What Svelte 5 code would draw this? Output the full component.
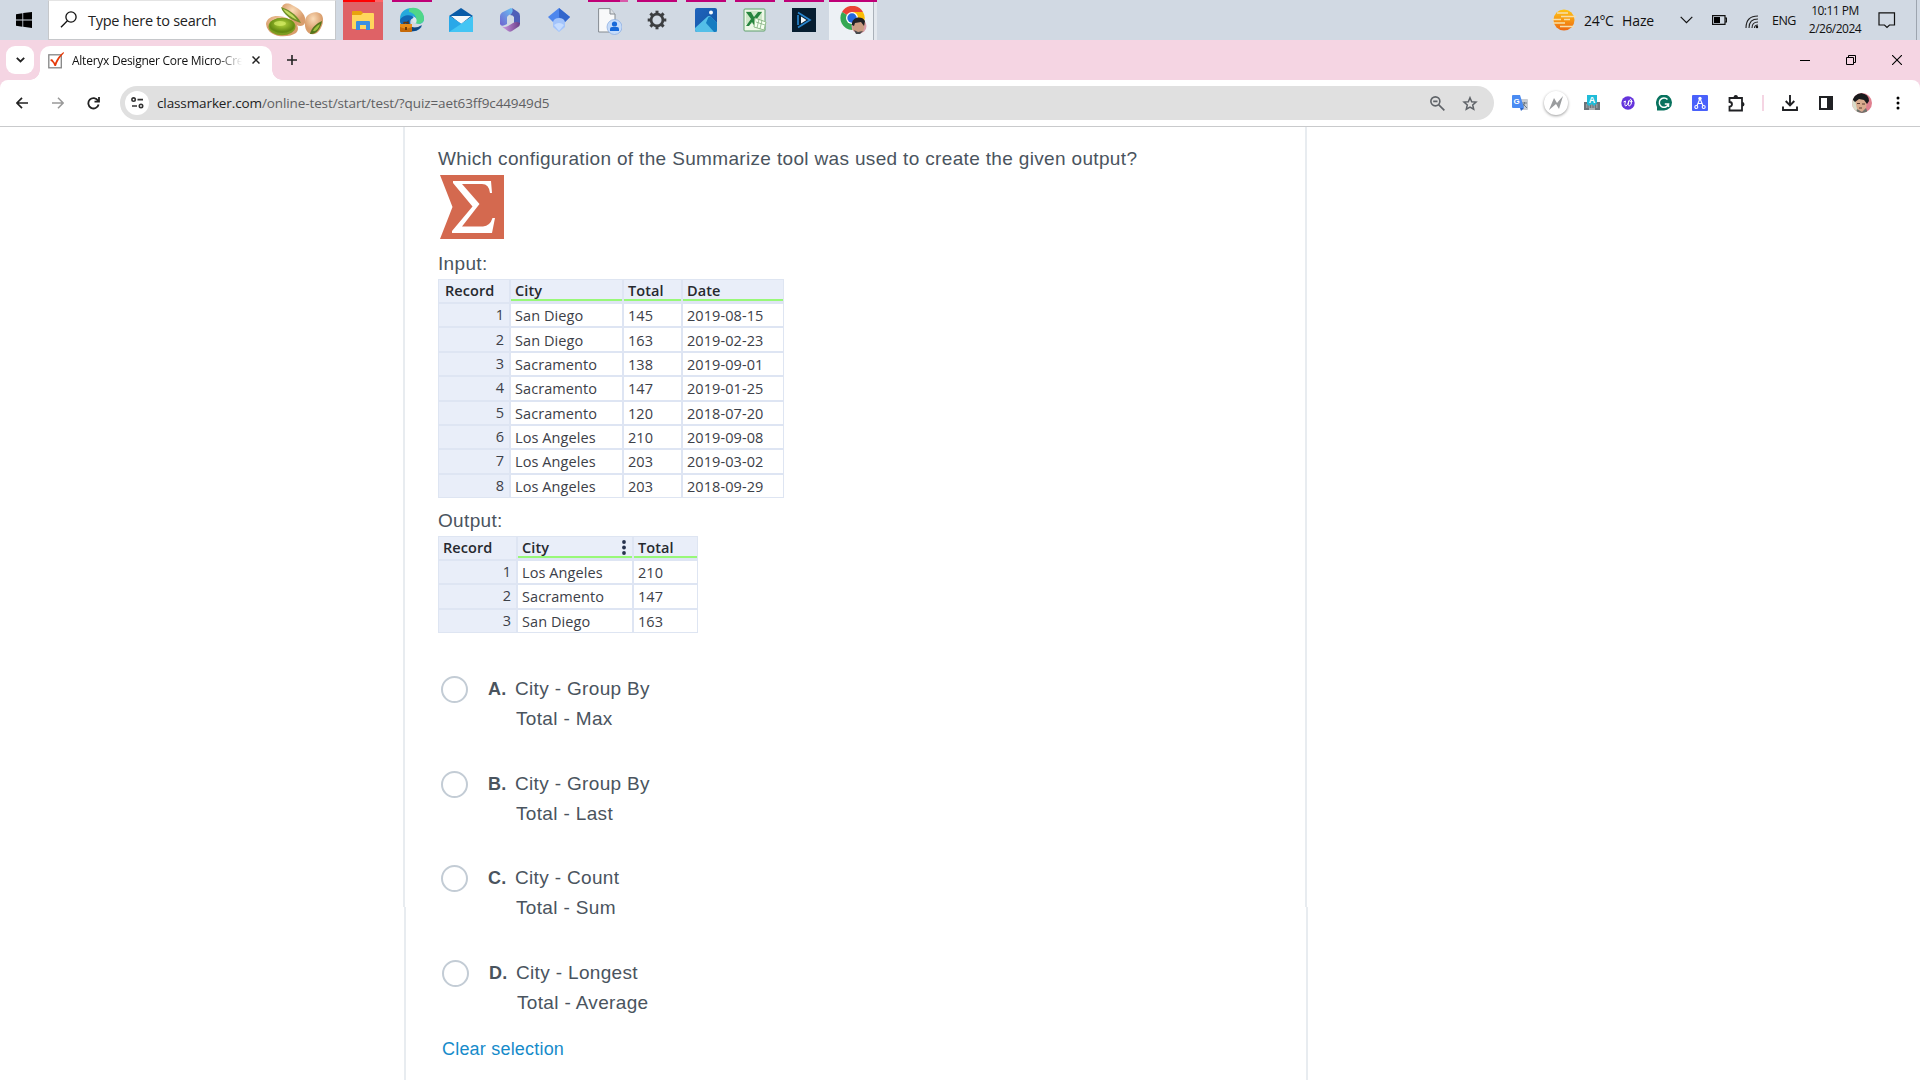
<script>
  const inputRows = [
    ['San Diego', '145', '2019-08-15'],
    ['San Diego', '163', '2019-02-23'],
    ['Sacramento', '138', '2019-09-01'],
    ['Sacramento', '147', '2019-01-25'],
    ['Sacramento', '120', '2018-07-20'],
    ['Los Angeles', '210', '2019-09-08'],
    ['Los Angeles', '203', '2019-03-02'],
    ['Los Angeles', '203', '2018-09-29'],
  ];
  const outputRows = [
    ['Los Angeles', '210'],
    ['Sacramento', '147'],
    ['San Diego', '163'],
  ];
  const options = [
    { key: 'A', first: 'City - Group By', second: 'Total - Max' },
    { key: 'B', first: 'City - Group By', second: 'Total - Last' },
    { key: 'C', first: 'City - Count', second: 'Total - Sum' },
    { key: 'D', first: 'City - Longest', second: 'Total - Average' },
  ];
</script>

{#snippet answer(o)}
  <label class="option">
    <span class="radio"></span>
    <b>{o.key}.</b>
    <span class="lines"><span>{o.first}</span><span class="second">{o.second}</span></span>
  </label>
{/snippet}

<div class="screen">
  <header class="taskbar">
    <div class="start">
      <svg width="16" height="16" viewBox="0 0 16 16"><path d="M0 2.2 6.4 1.3V7.5H0zM7.2 1.1 16 0V7.5H7.2zM0 8.4H6.4V14.7L0 13.8zM7.2 8.4H16V16L7.2 14.8z" /></svg>
    </div>
    <div class="search">
      <svg width="18" height="18" viewBox="0 0 18 18" fill="none" stroke="#111" stroke-width="1.3"><circle cx="11" cy="6" r="5.1" /><path d="M7.4 9.7 1 16.2" /></svg>
      <span>Type here to search</span>
      <svg class="nuts" width="60" height="36" viewBox="0 0 60 36">
        <defs>
          <radialGradient id="shell" cx=".45" cy=".3"><stop offset="0" stop-color="#fbdcb8" /><stop offset="1" stop-color="#d99d6c" /></radialGradient>
          <radialGradient id="nut" cx=".5" cy=".4"><stop offset="0" stop-color="#b9d93e" /><stop offset="1" stop-color="#648a12" /></radialGradient>
        </defs>
        <path d="M17 6C17 2 22 0 27 3 36 7 42 14 40 21 38 26 31 24 27 20z" fill="url(#shell)" />
        <path d="M16 5C22 7 32 12 36 21 28 19 18 13 16 5" fill="#6f8f27" />
        <path d="M18 7C23 9 29 13 32 18 26 15 21 12 18 7" fill="#c4dc62" />
        <path d="M1 22C2 13 15 12 24 17 33 20 35 27 31 31 24 36 3 37 1 22" fill="url(#shell)" />
        <ellipse cx="17" cy="24.500" rx="13.500" ry="8.800" fill="#7d9c20" />
        <ellipse cx="17" cy="23.500" rx="12.500" ry="7.500" fill="url(#nut)" />
        <ellipse cx="15" cy="21.500" rx="6" ry="2.500" fill="#d5ec68" opacity=".7" />
        <path d="M40 20C40 11 51 8 56 12 60 16 58 26 52 31 44 35 39 28 40 20" fill="url(#shell)" />
        <path d="M45 32C46 26 52 21 57 19 56 26 51 33 45 32" fill="#55751b" />
        <path d="M48 29C49 26 53 23 55 22 54 26 51 30 48 29" fill="#9ec03c" />
      </svg>
    </div>

    <nav class="apps">
      <div class="app explorer">
        <svg width="24" height="24" viewBox="0 0 24 24"><path d="M1 4Q1 3 2 3H10L12 5V9H1z" fill="#e8a30d" /><path d="M1 7H10L12 5H22Q23 5 23 6V20Q23 21 22 21H2Q1 21 1 20z" fill="#ffd65c" /><path d="M5 22V14Q5 13 6 13H18Q19 13 19 14V22H15V17H9V22z" fill="#3b8fe0" /></svg>
      </div>
      <div class="app open">
        <svg width="24" height="26" viewBox="0 0 24 26"><path d="M0 12C0 5 5 1 12 1S24 6 24 12C24 16 20 18 16 16 17 12 15 9 11 9 6 9 2 12 0 17z" fill="#25a9dc" /><path d="M9 1.500C17-1 24 4 24 12 24 16 19 18 15 16 18 11 15 6 9 5z" fill="#50d788" /><path d="M0 13C2 8 12 6 15 12 10 10 9 16 12 20 16 22 20 21 22 19 19 25 10 26 5 22 1 19 0 16 0 13" fill="#1268b4" /><path d="M9 13C8 20 14 23 22 18 17 27 7 25 6 18 6 15 7 14 9 13" fill="#104780" /><path d="M16 16C12 16 11 12 14 10 17 11 17 14 16 16" fill="#dce7f0" /><rect x="0" y="17" width="12" height="8" rx="1" fill="#c66a08" /><path d="M0 17H12V20L6 22 0 20z" fill="#e78c18" /><path d="M4 17V15.500H8V17" fill="none" stroke="#68370b" stroke-width="1.300" /><rect x="5" y="20" width="2" height="3" fill="#6b3908" /></svg>
      </div>
      <div class="app">
        <svg width="24" height="24" viewBox="0 0 24 24"><path d="M0 8 12 0 24 8 12 16z" fill="#095ba7" /><path d="M2 8H22L12 16z" fill="#f5f8fa" /><path d="M0 8 12 16 0 24z" fill="#37b5ef" /><path d="M0 8 24 23V24H0z" fill="#29a8e8" /><path d="M24 8V24H0z" fill="#43c5f4" /></svg>
      </div>
      <div class="app">
        <svg width="20" height="24" viewBox="0 0 20 24">
          <defs><linearGradient id="m1" x1="0" y1="1" x2="1" y2="0"><stop stop-color="#6f62cf" /><stop offset="1" stop-color="#69c8f6" /></linearGradient><linearGradient id="m2" x1="0" x2="1"><stop stop-color="#d6a0e9" /><stop offset="1" stop-color="#683d87" /></linearGradient></defs>
          <path d="M11 0 2 4.500Q0 6 0 8V16Q1 19 5 17L7 16V9.500Q7 8 9 7L14 5Q14 1 11 0" fill="url(#m1)" />
          <path d="M12 0 18 4Q20 5 20 8V16Q18 19 14 17V9Q13 7 10 7 14 4 12 0" fill="#4f5fb8" />
          <path d="M1 18 8 23Q10 24.500 12 23L18 19Q20 18 20 15 16 13 13 15L8 18Q4 20 1 18" fill="url(#m2)" />
        </svg>
      </div>
      <div class="app">
        <svg width="24" height="24" viewBox="0 0 24 24"><path d="M12 0 23 9 17 15H7L1 9z" fill="#4d86ed" /><path d="M12 0 23 9 17 15 12 9z" fill="#3266cc" /><path d="M6 14Q7 10 12 10T18 14V19L12 24 6 19z" fill="#a3c4fb" /><path d="M7 17Q12 13 17 17L12 23z" fill="#c5dcff" /></svg>
      </div>
      <div class="app open grouped">
        <svg class="contact" width="24" height="27" viewBox="0 0 24 27"><path d="M.6.600H12L17 6V24H.600z" fill="#f8f9fa" stroke="#858b91" /><path d="M12 .600V6H17" fill="#dfe3e7" stroke="#858b91" /><circle cx="16.500" cy="19" r="7.500" fill="#c6dcfa" stroke="#86a9df" stroke-width=".7" /><circle cx="16.500" cy="16" r="2.600" fill="#1769da" /><path d="M12 23V21Q12 19 14 19H19Q21 19 21 21V23z" fill="#1769da" /></svg>
      </div>
      <div class="app open">
        <svg width="20" height="20" viewBox="-10 -10 20 20">
          <circle r="5.900" fill="none" stroke="#3c3e41" stroke-width="2.700" />
          {#each [0, 45, 90, 135, 180, 225, 270, 315] as a}<rect x="-1.500" y="-9.300" width="3" height="3.200" fill="#3c3e41" transform="rotate({a})" />{/each}
        </svg>
      </div>
      <div class="app open">
        <svg width="24" height="24" viewBox="0 0 24 24"><defs><linearGradient id="photo" x1="0" y1="0" x2="1" y2="1"><stop stop-color="#1f62bb" /><stop offset="1" stop-color="#1257a5" /></linearGradient></defs><rect width="22" height="24" x="1" rx="2" fill="url(#photo)" /><path d="M1 20 13 9Q15 7 17 9L23 15V22Q23 24 21 24H3Q1 24 1 22z" fill="#54bfe8" /><path d="M14 10Q15 8 17 9L23 15V22Q23 24 21 24H20L12 15z" fill="#167cc1" /><circle cx="17" cy="4.500" r="2" fill="#f7fbfe" /></svg>
      </div>
      <div class="app open">
        <svg width="24" height="24" viewBox="0 0 24 24"><rect x="1" y="1" width="21" height="22" rx="1" fill="#eef8e8" stroke="#5fa06c" /><path d="M3 3H19V16H3z" fill="#cfe8c9" /><path d="M3 4H8L11 9 15 4H19L13 12 17 19H12L9 14 6 18H3L8 11z" fill="#25843d" /><path d="M12 10 23 14 21 22 11 19z" fill="#f5fff0" stroke="#93bd8c" /><path d="M13 14 22 17M16 11 14 20M19 12 17 21" stroke="#79a875" stroke-width=".7" /></svg>
      </div>
      <div class="app open">
        <svg width="24" height="24" viewBox="0 0 24 24"><rect width="24" height="24" fill="#061d30" /><path d="M6 4.500 18 12 6 19.500M6 7V17" fill="none" stroke="#2785ce" stroke-width="1.700" /><path d="M9 8.500 14.500 12 9 15.500z" fill="#f3f8fb" /></svg>
      </div>
      <div class="app open current">
        <svg width="28" height="28" viewBox="0 0 28 28"><path d="M12 12 2 6A12 12 0 0 1 23 6z" fill="#ea4335" /><path d="M12 12 2 6A12 12 0 0 0 12 24L18 15z" fill="#34a853" /><path d="M12 6H23A12 12 0 0 1 12 24L18 15z" fill="#fbbc05" /><circle cx="12" cy="12" r="6" fill="#fff" /><circle cx="12" cy="12" r="4.700" fill="#2368dd" /><circle cx="19" cy="20" r="7.500" fill="#d99cab" /><path d="M13 24C11 11 24 8 25 18L23 26H16z" fill="#c99c82" /><path d="M12 19C11 11 22 9 25 15L24 20 21 16 15 17 14 20z" fill="#202125" /><path d="M14 24 18 26 23 25 20 28H16z" fill="#48494d" /></svg>
      </div>
    </nav>

    <div class="tray">
      <svg class="haze" width="24" height="22" viewBox="0 0 24 22"><defs><linearGradient id="sun" x2="0" y2="1"><stop stop-color="#ffc515" /><stop offset="1" stop-color="#ed6811" /></linearGradient></defs><circle cx="12" cy="11" r="10.500" fill="url(#sun)" /><path d="M5 4H16M9 7.500H24M0 10.500H9M12 10.500H18M1 14H13M8 17.500H22" stroke="#f6dfaa" stroke-width="1.300" /></svg>
      <span class="temp">24°C</span><span class="cond">Haze</span>
      <svg class="chev" width="13" height="8" viewBox="0 0 13 8" fill="none" stroke="#111" stroke-width="1.200"><path d="M.7.800 6.500 6.600 12.300.800" /></svg>
      <svg class="batt" width="15" height="10" viewBox="0 0 15 10"><path d="M.6.600H13V9.400H.600zM13 3H14.500V7H13" fill="none" stroke="#111" stroke-width="1.200" /><path d="M2 2H8V8H2z" /></svg>
      <svg class="wifi" width="14" height="14" viewBox="0 0 14 14" fill="none" stroke="#222" stroke-width="1.100"><path d="M1 13Q1 1 13 1M4 13Q4 4 13 4M7 13Q7 7 13 7M9.500 13Q9.500 10 13 10" /><circle cx="12" cy="12" r="1.200" fill="#111" stroke="none" /></svg>
      <span class="lang">ENG</span>
      <div class="clock"><span class="time">10:11 PM</span><span class="date">2/26/2024</span></div>
      <svg class="notice" width="18" height="17" viewBox="0 0 18 17" fill="none" stroke="#111" stroke-width="1.200"><path d="M1 .800H16.500V13H11.500L9 15.500 6.500 13H1z" /></svg>
      <i class="desk"></i>
    </div>
  </header>

  <div class="tabs">
    <div class="tabsearch"><svg width="9" height="6" viewBox="0 0 9 6" fill="none" stroke="#222" stroke-width="1.800"><path d="M.8.800 4.500 4.400 8.200.800" /></svg></div>
    <div class="tab">
      <svg width="16" height="17" viewBox="0 0 16 17"><rect x=".8" y="2.800" width="12.500" height="13" fill="#fff" stroke="#858585" stroke-width="1.300" /><path d="M2 8 4 7 7 11Q10 4 15.500 0L16 1Q10 7 8 14H6.500Q5 10 2 8" fill="#e63a0a" /></svg>
      <span class="title">Alteryx Designer Core Micro-Cre</span>
      <svg class="x" width="8" height="8" viewBox="0 0 8 8" stroke="#222" stroke-width="1.500"><path d="M.5.500 7.500 7.500M7.500.500.500 7.500" /></svg>
    </div>
    <svg class="plus" width="10" height="10" viewBox="0 0 10 10" stroke="#222" stroke-width="1.600"><path d="M5 0V10M0 5H10" /></svg>
    <div class="window">
      <svg width="10" height="10" viewBox="0 0 10 10" stroke="#000"><path d="M0 5.500H10" /></svg>
      <svg width="10" height="10" viewBox="0 0 10 10" fill="none" stroke="#000"><path d="M.5 2.500H7.500V9.500H.500zM2.500 2.500V.500H9.500V7.500H7.500" /></svg>
      <svg width="10" height="10" viewBox="0 0 10 10" stroke="#000" stroke-width="1.100"><path d="M0 0 10 10M10 0 0 10" /></svg>
    </div>
  </div>

  <div class="toolbarback">
    <div class="toolbar">
      <svg class="back" width="12" height="12" viewBox="0 0 12 12" fill="none" stroke="#222" stroke-width="1.700"><path d="M12 6H1M6 .800.900 6 6 11.200" /></svg>
      <svg class="fwd" width="12" height="12" viewBox="0 0 12 12" fill="none" stroke="#999" stroke-width="1.500"><path d="M0 6H11M6 .800 11.100 6 6 11.200" /></svg>
      <svg class="reload" width="13" height="13" viewBox="0 0 13 13" fill="none" stroke="#222" stroke-width="1.800"><path d="M11 3.600A5.200 5.200 0 1 0 11.600 7.500M12 0V4.600H7.500" /></svg>
      <div class="url">
        <span class="site"><svg width="13" height="12" viewBox="0 0 13 12" fill="none" stroke="#333" stroke-width="1.600"><circle cx="2.600" cy="2.600" r="1.700" /><path d="M6.500 2.600H12M1 9H6" /><circle cx="10" cy="9" r="1.700" /></svg></span>
        <span class="address">classmarker.com<em>/online-test/start/test/?quiz=aet63ff9c44949d5</em></span>
        <svg class="zoom" width="15" height="15" viewBox="0 0 14 14" fill="none" stroke="#5f6368" stroke-width="1.500"><circle cx="5" cy="5" r="4.200" /><path d="M8 8 13.400 13.400M3 5H7" /></svg>
        <svg class="star" width="16" height="15" viewBox="0 0 16 15" fill="none" stroke="#5f6368" stroke-width="1.500"><path d="M8 1.700 9.700 5.700 14 6.100 10.700 9 11.700 13.200 8 11 4.300 13.200 5.300 9 2 6.100 6.300 5.700z" /></svg>
      </div>
      <div class="extensions">
        <svg width="16" height="16" viewBox="0 0 16 16"><path d="M6 4H15Q16 4 16 5V14Q16 15 15 15H10z" fill="#c8cdd3" /><path d="M10 8H15M12.500 7V8Q12 11 10 13M11 9 15 13" fill="none" stroke="#6b7885" /><path d="M1 0H8L12 13H1Q0 13 0 12V1Q0 0 1 0" fill="#4a8bf2" /><path d="M8 13H12L9 16z" fill="#2862c7" /><text x="1.500" y="9" font-size="8">G</text></svg>
        <span class="bolt"><svg width="14" height="15" viewBox="0 0 14 15"><path d="M0 14 5 2 8 7 14 0 10 13 7 8z" fill="#9a9c9e" /></svg></span>
        <svg width="16" height="16" viewBox="0 0 16 16"><path d="M0 7H16V15H0z" fill="#6c7379" /><path d="M2 10H14M2 12H14" stroke="#bbc2c7" stroke-dasharray="1.500 1" /><path d="M5 14H11" stroke="#eee" /><path d="M3 0H13V8L10 11 8 9 5 11 3 9z" fill="#20bcd8" /><text x="4.800" y="8" font-size="9">A</text></svg>
        <svg width="14" height="14" viewBox="0 0 14 14"><circle cx="7" cy="7" r="6.700" fill="#6534dc" /><path d="M2.500 6 4.500 5Q3 10 5 10 7 9 8 4.500 6.500 10 8.500 10 11 9 10.500 4 9.500 2 8.800 4.500 9 7 11.500 5.500" fill="none" stroke="#fff" /></svg>
        <svg width="16" height="16" viewBox="0 0 16 16"><path d="M0 8A8 8 0 1 1 8 15.500H1V12Q0 10 0 8" fill="#08725e" /><path d="M11.500 4.500A4.700 4.700 0 1 0 12.500 9H8.800M12.500 9V12" fill="none" stroke="#fff" stroke-width="1.500" /></svg>
        <svg width="16" height="16" viewBox="0 0 16 16"><rect width="16" height="16" rx="1" fill="#4961fb" /><path d="M8 3.500 4.500 12M8 3.500 11.500 12M6 8.500H10" fill="none" stroke="#fff" stroke-width="1.100" /><circle cx="8" cy="3.500" r="1.700" fill="#fff" /><circle cx="4.300" cy="12" r="1.500" fill="#4961fb" stroke="#fff" stroke-width="1.100" /><circle cx="11.700" cy="12" r="1.500" fill="#4961fb" stroke="#fff" stroke-width="1.100" /></svg>
        <svg width="18" height="17" viewBox="-1 0 18 17" fill="none" stroke="#202124" stroke-width="1.800"><path d="M1.500 3H14V15.500H1.500V11.700Q4 11.500 4 9.300T1.500 7z" /><path d="M5.500 3Q5.500 0 7.800 0T10 3zM14 7Q16.500 7 16.500 9.300T14 11.500z" fill="#202124" stroke="none" /></svg>
        <i class="sep"></i>
        <svg class="down" width="16" height="16" viewBox="0 0 16 16" fill="none" stroke="#202124" stroke-width="1.900"><path d="M8 0V10M3.700 6 8 10.300 12.300 6M1 11.500V15H15V11.500" /></svg>
        <svg class="panel" width="14" height="14" viewBox="0 0 14 14"><rect x="1" y="1" width="12" height="12" fill="#fff" stroke="#202124" stroke-width="2" /><path d="M8 0H14V14H8z" fill="#202124" /></svg>
        <svg class="person" width="20" height="20" viewBox="0 0 20 20"><clipPath id="av"><circle cx="10" cy="10" r="10" /></clipPath><g clip-path="url(#av)"><path d="M0 0H20V20H0z" fill="#e0808f" /><path d="M0 5H6V20H0z" fill="#d8dcca" /><path d="M3 7 8 4 15 8 14 15 10 19 5 16z" fill="#d9ab8d" /><path d="M1 7Q1 0 9 0 17 1 17 8L15 11 12 7 7 6 3 9z" fill="#191a1c" /><path d="M5 16 10 19 14 15 16 20H4z" fill="#6f756c" /><path d="M5 10.500H8M10 11H13M7 15H10" stroke="#5b3c32" /></g></svg>
        <svg class="dots" width="4" height="14" viewBox="0 0 4 14"><circle cx="2" cy="2" r="1.500" /><circle cx="2" cy="7" r="1.500" /><circle cx="2" cy="12" r="1.500" /></svg>
      </div>
    </div>
  </div>

  <main>
    <section class="card upper">
      <p class="question">Which configuration of the Summarize tool was used to create the given output?</p>
      <svg class="sigma" width="64" height="64" viewBox="0 0 64 64"><path d="M0 0H64V64H0L12.500 32z" fill="#d4694f" /><path d="M13 6H51L52 18H50Q49 9 42 9H22L39.500 29 22 51.500H43Q50 51 52.500 43H55L52 58H12V56L32.500 31.500 13 8z" fill="#fff" /></svg>
      <p class="label">Input:</p>
      <div class="table input">
        <span class="th">Record</span><span class="th g">City</span><span class="th g">Total</span><span class="th g">Date</span>
        {#each inputRows as row, i}
          <span class="num">{i + 1}</span>
          {#each row as cell}<span class="td">{cell}</span>{/each}
        {/each}
      </div>
      <p class="label out">Output:</p>
      <div class="table output">
        <span class="th">Record</span><span class="th g split">City <svg width="4" height="15" viewBox="0 0 4 15" fill="#27334d"><circle cx="2" cy="2" r="1.900" /><circle cx="2" cy="7.500" r="1.900" /><circle cx="2" cy="13" r="1.900" /></svg></span><span class="th g">Total</span>
        {#each outputRows as row, i}
          <span class="num">{i + 1}</span>
          {#each row as cell}<span class="td">{cell}</span>{/each}
        {/each}
      </div>
      <div class="options">
        {#each options.slice(0, 3) as o}{@render answer(o)}{/each}
      </div>
    </section>
    <section class="card lower">
      {@render answer(options[3])}
      <a class="clear" href="#clear">Clear selection</a>
    </section>
  </main>
</div>

<style>
  :global(body) { margin: 0; overflow: hidden; background: #fff; }
  .screen { width: 1920px; height: 1080px; overflow: hidden; display: flex; flex-direction: column; font-family: "Open Sans", "Noto Sans", sans-serif; color: #111; }
  svg { flex: none; display: block; }
  span { white-space: nowrap; }

  .taskbar { height: 40px; flex: none; display: flex; background: #d1d9e3; }
  .start { width: 48px; display: flex; align-items: center; justify-content: center; }
  .search { box-sizing: border-box; width: 288px; height: 40px; border: 1px solid #c6c8cb; border-top-color: #e4e4e4; background: #fff; display: flex; align-items: center; padding: 0 10px 0 11px; }
  .search span { margin-left: 10px; font-size: 14.5px; letter-spacing: -.26px; color: #222; flex: 1; }
  .apps { display: flex; gap: 9px; margin-left: 7px; }
  .app { box-sizing: border-box; width: 40px; height: 40px; display: flex; align-items: center; justify-content: center; border-top: 2px solid transparent; padding-bottom: 2px; }
  .open { border-top-color: #bf0077; }
  .explorer { background: #df6266; border-top: 0; padding: 0; background-image: linear-gradient(90deg, #f00 0 32px, #ff6568 32px); background-size: 100% 2px; background-repeat: no-repeat; }
  .grouped { border-top: 0; padding: 2px 0 0 4px; background: linear-gradient(90deg, #bf0077 0 32px, #d85aaa 32px) top / 100% 2px no-repeat; }
  .current { width: 48px; margin-left: -4px; padding-left: 2px; background: linear-gradient(90deg, #edf1f5 0 44px, #aab1b9 44px 45px, #e3e8ee 45px); }
  .tray { margin-left: auto; display: flex; align-items: center; font-size: 14px; }
  .temp { margin-left: 8px; width: 38px; letter-spacing: -.3px; }
  .cond { width: 58px; letter-spacing: -.1px; }
  .batt { margin-left: 19px; }
  .wifi { margin: 3px 0 0 18px; }
  .lang { margin-left: 13px; width: 36px; font-size: 12.5px; letter-spacing: -.5px; }
  .clock { width: 52px; margin-left: 1px; display: flex; flex-direction: column; align-items: center; font-size: 12px; line-height: 18px; letter-spacing: -.5px; }
  .notice { margin-left: 17px; }
  .desk { width: 3px; height: 40px; margin-left: 20px; border-left: 1px solid #9da5af; }

  .tabs { height: 40px; flex: none; background: #f5d5e3; display: flex; align-items: center; }
  .tabsearch { width: 28px; height: 28px; margin-left: 6px; background: #fff; border-radius: 9px; display: flex; align-items: center; justify-content: center; }
  .tab { position: relative; box-sizing: border-box; width: 232px; height: 34px; margin: 6px 0 0 6px; padding: 0 12px 6px 8px; background: #fff; border-radius: 10px 10px 0 0; display: flex; align-items: center; }
  .tab::before, .tab::after { content: ""; position: absolute; bottom: 0; width: 10px; height: 10px; }
  .tab::before { left: -10px; background: radial-gradient(circle at 0 0, transparent 9.5px, #fff 10px); }
  .tab::after { right: -10px; background: radial-gradient(circle at 100% 0, transparent 9.5px, #fff 10px); }
  .title { margin: 1px auto 0 8px; width: 174px; font-size: 12px; letter-spacing: -.25px; -webkit-mask-image: linear-gradient(90deg, #000 145px, transparent 170px); mask-image: linear-gradient(90deg, #000 145px, transparent 170px); }
  .plus { margin-left: 15px; }
  .window { margin-left: auto; margin-right: 18px; display: flex; gap: 36px; }

  .toolbarback { flex: none; height: 46px; background: linear-gradient(#f5d5e3 20px, #fff 20px); border-bottom: 1px solid #c9cacc; }
  .toolbar { height: 46px; background: #fff; border-radius: 8px 8px 0 0; display: flex; align-items: center; }
  .back { margin-left: 16px; }
  .fwd { margin-left: 24px; }
  .reload { margin-left: 23px; }
  .url { box-sizing: border-box; width: 1374px; height: 34px; margin-left: 20px; padding: 0 16px 0 5px; border-radius: 17px; background: #e0e0e0; display: flex; align-items: center; }
  .site { width: 24px; height: 24px; border-radius: 50%; background: #fff; display: flex; align-items: center; justify-content: center; }
  .address { margin-left: 8px; font-size: 13.5px; letter-spacing: -.11px; color: #222; }
  .address em { font-style: normal; color: #5f6063; }
  .zoom { margin-left: auto; }
  .star { margin-left: 17px; }
  .extensions { display: grid; grid-template-columns: repeat(7, 36px) 18px repeat(4, 36px); align-items: center; justify-items: center; margin-left: 8px; }
  .extensions text { font-family: "Liberation Sans", sans-serif; font-weight: bold; fill: #fff; }
  .bolt { width: 24px; height: 24px; border-radius: 50%; box-shadow: 0 1px 3px #0006; display: flex; align-items: center; justify-content: center; }
  .sep { width: 2px; height: 16px; background: #f5d5e3; }

  main { flex: 1; display: flex; flex-direction: column; font-family: "Liberation Sans", Arial, sans-serif; font-size: 19px; letter-spacing: .34px; color: #4a545e; }
  .card { box-sizing: border-box; width: 904px; border: solid #e8ecf0; border-width: 0 2px; margin-left: 403px; padding-left: 33px; }
  .upper { height: 780px; flex: none; }
  .lower { flex: 1; margin-left: 404px; padding-top: 51px; }
  p { margin: 0; line-height: 30px; }
  .question { padding-top: 17px; }
  .sigma { margin: 1px 0 0 2px; }
  .label { margin-top: 10px; }
  .table { display: grid; box-sizing: border-box; border: 1px solid #dee5f2; background: #dee5f3; column-gap: 2px; font-family: "Open Sans", "Noto Sans", sans-serif; font-size: 14.5px; letter-spacing: .08px; color: #3c4048; }
  .input { width: 346px; height: 219px; grid-template-columns: 70px 111px 57px 1fr; grid-template-rows: 22px repeat(8, 1fr); row-gap: 2px; }
  .output { width: 260px; height: 97px; grid-template-columns: 77px 114px 1fr; grid-template-rows: 22px repeat(3, 1fr); row-gap: 2px; }
  .table > span { display: flex; align-items: center; padding-left: 4px; min-height: 0; line-height: 20px; }
  .table .th { font-weight: 600; color: #26292f; background: #e9eef9; padding-bottom: 0; }
  .table .g { border-bottom: 2px solid #98f878; box-sizing: border-box; padding-top: 2px; margin-bottom: 1px; }
  .table .split { justify-content: space-between; padding-right: 6px; }
  .input .th:first-child { padding-left: 6px; }
  .table .td { background: #fff; padding-top: 2px; }
  .table .num { background: #e9eef9; justify-content: flex-end; padding: 0 5px 0 0; }
  .output .num { padding-right: 5px; }
  .out { margin-top: 8px; }
  .options { margin-top: 41px; }
  .option { display: flex; height: 94.5px; }
  .radio { box-sizing: border-box; width: 27px; height: 27px; margin: 2px 0 0 3px; border: 2.5px solid #c3ccd5; border-radius: 50%; flex: none; }
  .option b { width: 27px; margin-left: 20px; line-height: 30px; font-size: 18px; }
  .lines { display: flex; flex-direction: column; line-height: 30px; }
  .second { margin-left: 1px; }
  .clear { display: block; width: max-content; margin: -14px 0 0 3px; color: #168bca; text-decoration: none; font-size: 18px; line-height: 20px; letter-spacing: .2px; }
</style>
